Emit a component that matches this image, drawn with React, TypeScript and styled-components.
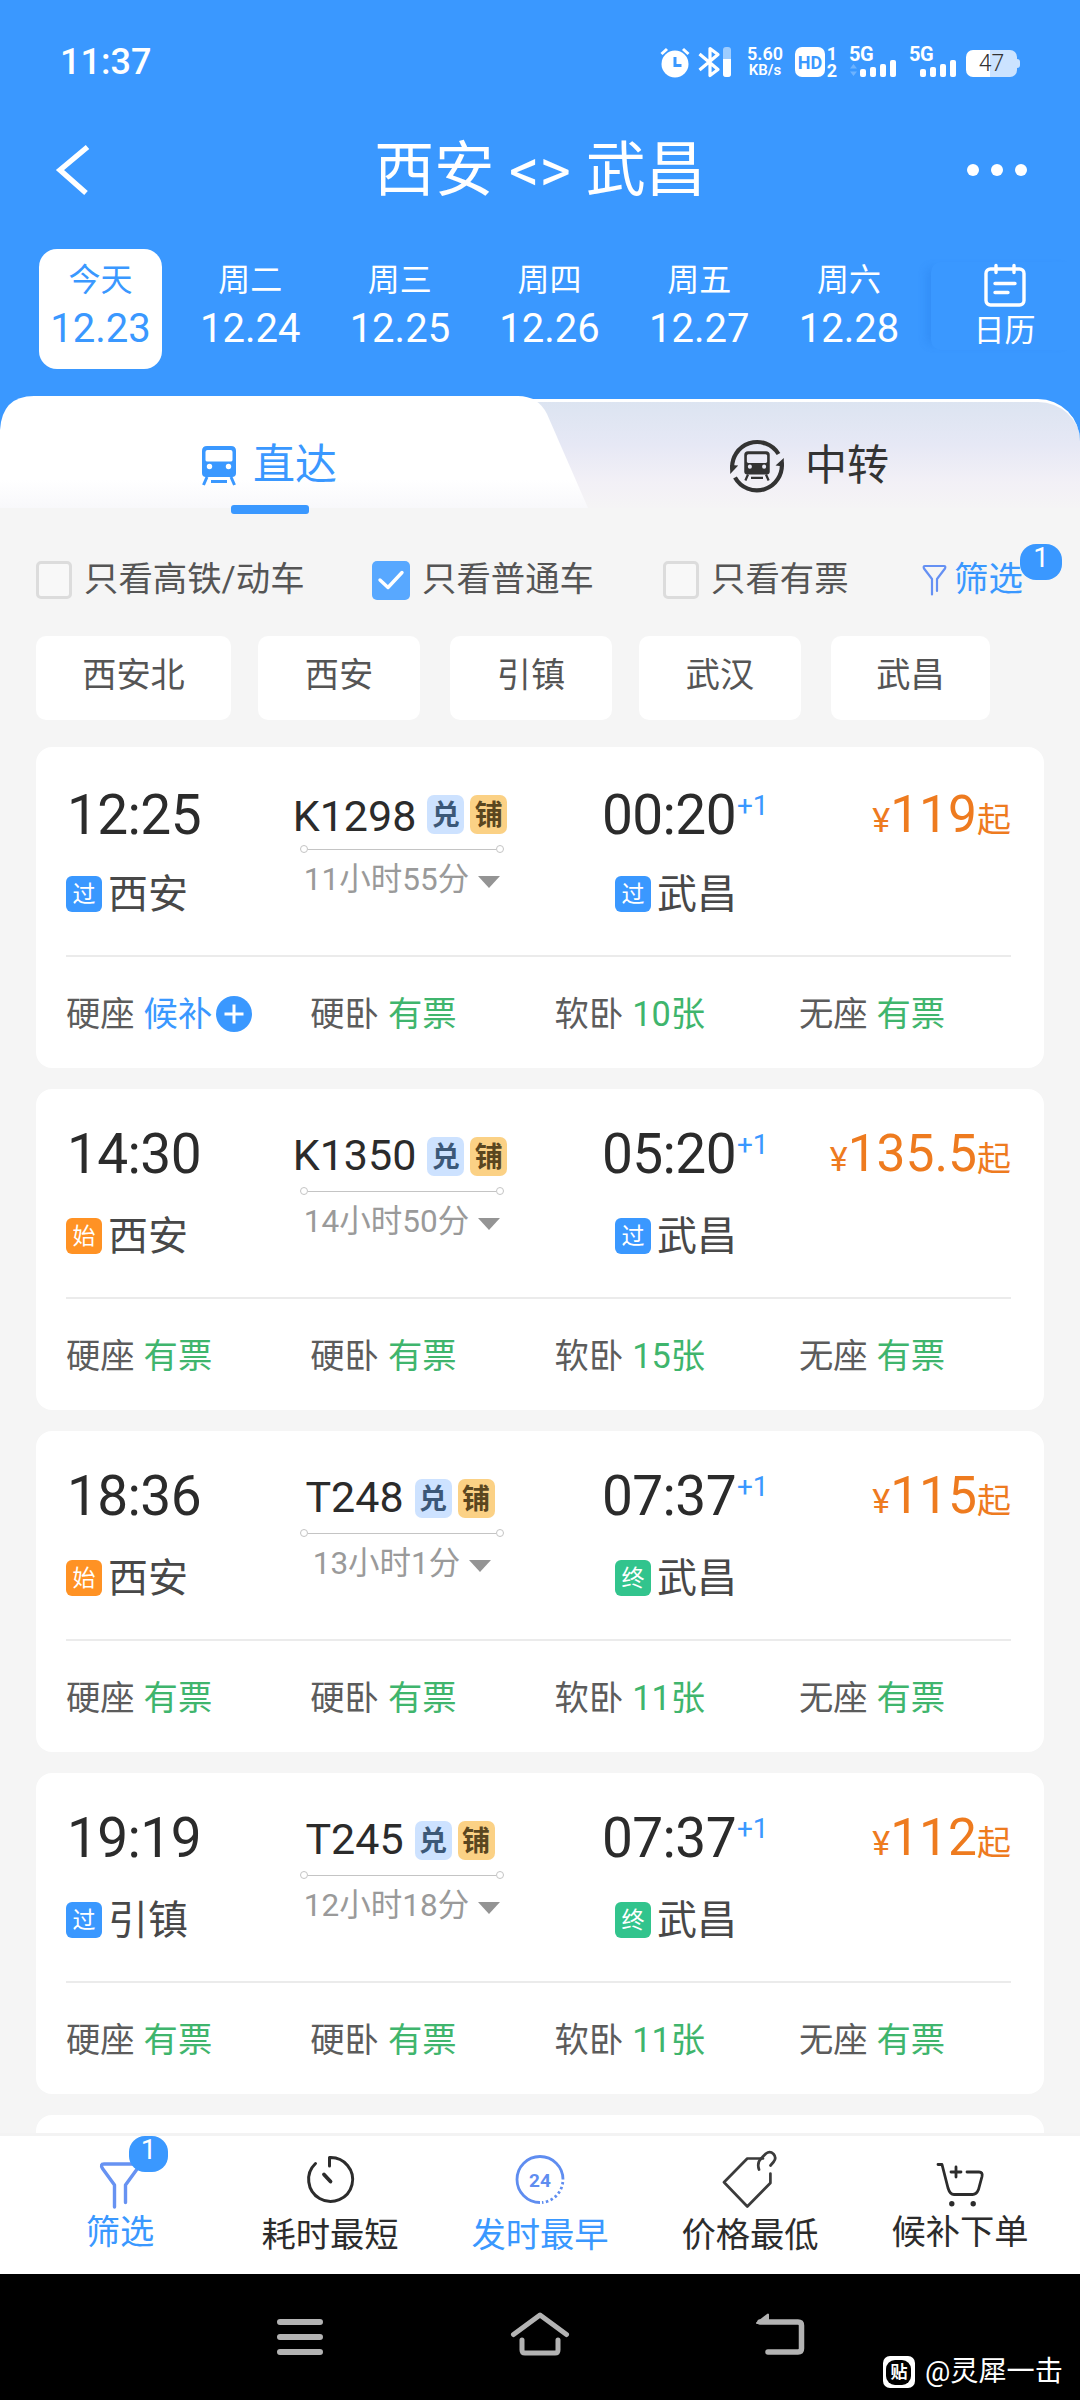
import React from "react";
import styled, { createGlobalStyle, css } from "styled-components";

const BLUE = "#3a98ff";
const GREEN = "#3fb56d";
const ORANGE = "#ee7b1f";

const GlobalStyle = createGlobalStyle`
  body { margin: 0; background: #f5f5f5; }
  * { box-sizing: border-box; }
  svg { display: block; flex: none; overflow: visible; }
`;

const Phone = styled.div`
  width: 1080px;
  height: 2400px;
  display: flex;
  flex-direction: column;
  overflow: hidden;
  background: #f5f5f5;
  color: #333;
  font-family: Roboto, "Noto Sans CJK SC", sans-serif;
  white-space: nowrap;
`;

const Header = styled.header`
  background: ${BLUE};
  color: #fff;
  flex: none;
`;

/* ---------- status bar ---------- */
const StatusBar = styled.div`
  height: 121px;
  padding: 2px 60px 0 60px;
  display: flex;
  align-items: center;
  justify-content: space-between;
`;
const Clock = styled.span`
  font-size: 36px;
  line-height: 40px;
  font-weight: 500;
`;
const StatusIcons = styled.div`
  display: flex;
  align-items: center;
  height: 30px;
`;
const Gap = styled.span<{ $w: number }>`
  width: ${(p) => p.$w}px;
`;
const Speed = styled.div`
  width: 36px;
  margin: 0 12px 0 15px;
  display: flex;
  flex-direction: column;
  align-items: center;
  font-weight: 600;
`;
const SpeedLine = styled.span<{ $size: number }>`
  font-size: ${(p) => p.$size}px;
  line-height: 16px;
`;
const HdBadge = styled.span`
  width: 30px;
  height: 30px;
  border-radius: 7px;
  background: #fff;
  color: ${BLUE};
  font-size: 18px;
  line-height: 31px;
  font-weight: 700;
  text-align: center;
`;
const SimNumbers = styled.span`
  width: 12px;
  margin-left: 1px;
  display: flex;
  flex-direction: column;
  align-items: center;
  font-size: 18px;
  line-height: 17px;
  font-weight: 700;
`;
const Signal = styled.span<{ $gap: number }>`
  width: 48px;
  height: 30px;
  margin-left: ${(p) => p.$gap}px;
  display: grid;
  grid-template-columns: 11px 37px;
  grid-template-rows: 14px 16px;
`;
const NetType = styled.span`
  grid-column: 1 / 3;
  font-size: 20px;
  line-height: 15px;
  font-weight: 700;
  letter-spacing: -0.5px;
`;
const Bars = styled.span`
  grid-column: 2;
  display: flex;
  align-items: flex-end;
  gap: 4px;
`;
const Bar = styled.i<{ $h: number }>`
  width: 6px;
  height: ${(p) => p.$h}px;
  border-radius: 2px;
  background: #fff;
  flex: none;
`;
const Traffic = styled.svg`
  align-self: end;
`;
const Battery = styled.span`
  width: 51px;
  height: 27px;
  margin: 3px 0 0 9px;
  border-radius: 7px;
  background: linear-gradient(90deg, #fff 48%, #cbe3ff 48%);
  color: #333;
  font-size: 23px;
  line-height: 28px;
  font-weight: 300;
  text-align: center;
`;
const BatteryNub = styled.span`
  width: 3px;
  height: 9px;
  margin-top: 3px;
  border-radius: 0 3px 3px 0;
  background: #cbe3ff;
`;

/* ---------- title ---------- */
const TitleBar = styled.div`
  height: 94px;
  padding: 0 52px 0 56px;
  display: grid;
  grid-template-columns: 62px 1fr 66px;
  align-items: center;
`;
const Title = styled.h1`
  margin: 0;
  text-align: center;
  font-size: 60px;
  line-height: 94px;
  font-weight: 400;
  padding-top: 3px;
`;
const Dots = styled.div`
  display: flex;
  gap: 12px;
  padding-left: 5px;
`;
const Dot = styled.i`
  width: 12px;
  height: 12px;
  border-radius: 50%;
  background: #fff;
  flex: none;
`;

/* ---------- dates ---------- */
const DateStrip = styled.div`
  height: 181px;
  padding: 34px 0 27px 39px;
  display: flex;
`;
const DateList = styled.div`
  display: flex;
  gap: 26.7px;
  width: 880px;
`;
const DateTile = styled.div<{ $active?: boolean }>`
  width: 123px;
  height: 120px;
  flex: none;
  padding-top: 9px;
  border-radius: 18px;
  text-align: center;
  ${(p) =>
    p.$active &&
    css`
      background: #fff;
      color: ${BLUE};
    `}
`;
const Weekday = styled.div`
  font-size: 32px;
  line-height: 44px;
`;
const DayNumber = styled.div`
  font-size: 40px;
  line-height: 54px;
`;
const CalendarButton = styled.div`
  height: 88px;
  width: 149px;
  margin: 13px 0 0 12px;
  padding: 2px 2px 0 0;
  border-radius: 10px;
  box-shadow: -10px 0 10px -6px rgba(20, 100, 210, 0.2);
  display: flex;
  flex-direction: column;
  align-items: center;
  font-size: 31px;
  line-height: 46px;
`;

/* ---------- tabs ---------- */
const Tabs = styled.div`
  height: 112px;
  flex: none;
  display: flex;
  background: linear-gradient(${BLUE} 62px, #f5f5f5 62px);
`;
const TabItem = styled.div`
  display: flex;
  align-items: center;
  font-size: 42px;
  line-height: 60px;
`;
const DirectTab = styled(TabItem)`
  position: relative;
  z-index: 1;
  width: 588px;
  gap: 16px;
  padding: 26px 0 0 201px;
  color: ${BLUE};
  &::before {
    content: "";
    position: absolute;
    inset: 0;
    z-index: -1;
    background: linear-gradient(#fff 84px, #f8f8fb);
    clip-path: path("M0 34 Q2 0 34 0 H518 Q538 0 547 18 L588 112 H0 Z");
  }
  &::after {
    content: "";
    position: absolute;
    left: 231px;
    top: 109px;
    width: 78px;
    height: 9px;
    border-radius: 3px;
    background: ${BLUE};
  }
`;
const TransferTab = styled(TabItem)`
  flex: 1;
  margin: 3px 0 0 -80px;
  padding: 21px 0 0 221px;
  gap: 20px;
  border-top: 3px solid #fff;
  border-radius: 0 42px 0 0;
  background: linear-gradient(#dce4f1, #e6e8f5 40%, #f2f0f6 75%, #f5f4f5);
`;

/* ---------- filters ---------- */
const FilterRow = styled.div`
  height: 50px;
  flex: none;
  margin: 47px 0 31px 36px;
  display: grid;
  grid-template-columns: 336px 291px 259px auto;
  align-items: center;
`;
const Option = styled.label`
  display: flex;
  align-items: center;
  gap: 12px;
  font-size: 34.4px;
  line-height: 48px;
  color: #555;
`;
const OptionText = styled.span`
  margin-top: -2px;
`;
const Box = styled.span<{ $on?: boolean }>`
  width: ${(p) => (p.$on ? 38 : 36)}px;
  height: ${(p) => (p.$on ? 39 : 38)}px;
  border-radius: 5px;
  border: ${(p) => (p.$on ? "0" : "3px solid #dcdcdc")};
  background: ${(p) => (p.$on ? "#58a8ff" : "#f8f8f8")};
  display: flex;
  align-items: center;
  justify-content: center;
`;
const FilterLink = styled(Option)`
  position: relative;
  gap: 7px;
  color: ${BLUE};
`;
const Badge = styled.span<{ $x: number; $y: number; $w: number }>`
  position: absolute;
  left: ${(p) => p.$x}px;
  top: ${(p) => p.$y}px;
  width: ${(p) => p.$w}px;
  height: 36px;
  border-radius: 16px;
  background: ${BLUE};
  color: #fff;
  font-size: 28px;
  line-height: 28px;
  text-align: center;
`;

const Chips = styled.div`
  height: 84px;
  flex: none;
  margin: 0 0 27px 36px;
  display: flex;
`;
const Chip = styled.span<{ $w: number; $gap: number }>`
  width: ${(p) => p.$w}px;
  margin-right: ${(p) => p.$gap}px;
  border-radius: 10px;
  background: #fff;
  color: #555;
  font-size: 34.2px;
  line-height: 78px;
  text-align: center;
`;

/* ---------- train cards ---------- */
const List = styled.main`
  flex: 1;
  min-height: 0;
  overflow: hidden;
  padding: 0 36px;
  display: flex;
  flex-direction: column;
  gap: 21px;
`;
const Card = styled.article`
  height: 321px;
  flex: none;
  padding: 35px 33px 0 30px;
  border-radius: 16px;
  background: #fff;
`;
const Trip = styled.div`
  height: 175px;
  display: grid;
  grid-template-columns: 200px 268px 250px 1fr;
  border-bottom: 2px solid #ebebeb;
`;
const Stop = styled.div<{ $indent?: number }>`
  padding-left: ${(p) => p.$indent || 0}px;
`;
const TimeRow = styled.div<{ $shift: number }>`
  height: 94px;
  padding: ${(p) => p.$shift}px 0 0 1px;
  display: flex;
  font-size: 55px;
  letter-spacing: -0.6px;
  line-height: 60px;
  color: #2b2b2b;
`;
const NextDay = styled.span`
  margin-left: 1px;
  font-size: 28px;
  letter-spacing: 0;
  line-height: 42px;
  color: ${BLUE};
`;
const Station = styled.div<{ $indent?: number }>`
  margin-left: ${(p) => p.$indent || 0}px;
  height: 36px;
  display: flex;
  align-items: center;
  gap: 6px;
  font-size: 40px;
  line-height: 38px;
  color: #484848;
`;
const StationName = styled.span`
  padding-top: 2px;
`;
const kinds = { 过: BLUE, 始: "#ff9224", 终: "#32c48d" } as const;
type Kind = keyof typeof kinds;
const StationKind = styled.span<{ $kind: Kind }>`
  width: 36px;
  height: 36px;
  border-radius: 6px;
  background: ${(p) => kinds[p.$kind]};
  color: #fff;
  font-size: 23px;
  line-height: 38px;
  text-align: center;
`;
const Middle = styled.div`
  display: flex;
  flex-direction: column;
  align-items: center;
`;
const CodeRow = styled.div`
  height: 64px;
  padding-top: 13px;
  display: flex;
  align-items: flex-start;
`;
const Code = styled.span<{ $shift: number }>`
  margin: ${(p) => p.$shift - 1}px 11px 0 0;
  font-size: 43px;
  line-height: 38px;
  color: #2b2b2b;
`;
const Tag = styled.span<{ $tone: "blue" | "gold" }>`
  width: 37px;
  height: 39px;
  margin-right: ${(p) => (p.$tone === "blue" ? 6 : 0)}px;
  border-radius: 7px;
  background: ${(p) => (p.$tone === "blue" ? "#cde2ff" : "#fbd185")};
  color: ${(p) => (p.$tone === "blue" ? "#3c5878" : "#5a461f")};
  font-size: 28px;
  line-height: 42px;
  font-weight: 700;
  display: flex;
  justify-content: center;
`;
const Track = styled.div`
  width: 204px;
  height: 6px;
  margin-left: 4px;
  display: flex;
  align-items: center;
  &::before,
  &::after {
    content: "";
    width: 6px;
    height: 6px;
    border: 1px solid #c4c4c4;
    border-radius: 50%;
  }
`;
const TrackLine = styled.i`
  flex: 1;
  height: 1px;
  background: #c4c4c4;
`;
const Duration = styled.div`
  margin: 7px 0 0 4px;
  display: flex;
  align-items: center;
  gap: 9px;
  font-size: 31.5px;
  line-height: 42px;
  color: #9a9a9a;
`;
const Arrow = styled.i`
  margin-top: 4px;
  border: 11px solid transparent;
  border-top: 12px solid #949494;
  border-bottom: 0;
`;
const Price = styled.div<{ $shift: number }>`
  height: 60px;
  margin-top: ${(p) => p.$shift}px;
  display: flex;
  align-items: baseline;
  justify-content: flex-end;
  line-height: 60px;
  font-size: 34px;
  color: ${ORANGE};
`;
const Amount = styled.b`
  font-size: 51.5px;
  font-weight: 400;
`;
const Seats = styled.div`
  display: grid;
  grid-template-columns: 244.3px 244.3px 244.3px auto;
`;
const Seat = styled.div`
  height: 114px;
  display: flex;
  align-items: center;
  gap: 9px;
  font-size: 34.3px;
  line-height: 40px;
  color: #5c5c5c;
`;
const SeatState = styled.span<{ $color: string }>`
  display: flex;
  align-items: center;
  gap: 4px;
  color: ${(p) => p.$color};
`;

/* ---------- bottom bars ---------- */
const SortBar = styled.footer`
  height: 141px;
  flex: none;
  padding: 0 15px;
  border-top: 3px solid #f3f3f3;
  background: #fff;
  display: grid;
  grid-template-columns: repeat(5, 210px);
`;
const SortItem = styled.div<{ $blue?: boolean }>`
  position: relative;
  display: flex;
  flex-direction: column;
  align-items: center;
  padding-top: 11px;
  font-size: 34.3px;
  line-height: 46px;
  color: ${(p) => (p.$blue ? BLUE : "#2c2c2c")};
`;
const SortLabel = styled.span<{ $up?: boolean }>`
  margin-top: ${(p) => (p.$up ? 6 : 9)}px;
`;
const NavBar = styled.nav`
  height: 126px;
  flex: none;
  background: #000;
  position: relative;
  display: flex;
  align-items: flex-start;
  padding: 32px 0 0 270px;
  gap: 180px;
`;
const Watermark = styled.div`
  position: absolute;
  right: 17px;
  bottom: 10px;
  display: flex;
  align-items: center;
  gap: 10px;
  color: #fff;
  font-size: 28.2px;
  line-height: 36px;
`;
const Logo = styled.span`
  width: 32px;
  height: 32px;
  border-radius: 7px;
  background: #fff;
  display: flex;
  align-items: center;
  justify-content: center;
`;
const LogoInner = styled.span`
  width: 25px;
  height: 25px;
  border-radius: 9px;
  background: #000;
  font-size: 17px;
  line-height: 25px;
  font-weight: 700;
  text-align: center;
`;

/* ---------- icons ---------- */
const AlarmIcon = () => (
  <svg width="30" height="30" viewBox="0 0 30 30">
    <circle cx="15" cy="17" r="13.500" fill="#fff" />
    <path d="M1.500 7 7 2M28.500 7 23 2" stroke="#fff" strokeWidth="3" fill="none" />
    <path d="M15 10v8.500h6.500" stroke={BLUE} strokeWidth="3" fill="none" />
  </svg>
);
const BluetoothIcon = () => (
  <svg width="34" height="30" viewBox="0 0 34 30">
    <path d="M1.500 7 20 22.500 12 28.500V1.500L20 7.500 1.500 23" stroke="#fff" strokeWidth="3.200" fill="none" strokeLinejoin="round" />
    <rect x="25" y="0" width="8" height="30" rx="3" fill="#9dccff" />
    <path d="M25 12h8v15a3 3 0 0 1-3 3h-2a3 3 0 0 1-3-3z" fill="#fff" />
  </svg>
);
const BackIcon = () => (
  <svg width="34" height="50" viewBox="0 0 34 50">
    <path d="M31.500 2 4 25 30 48" stroke="#fff" strokeWidth="5.400" fill="none" />
  </svg>
);
const CalendarIcon = () => (
  <svg width="42" height="44" viewBox="0 0 42 44" fill="none" stroke="#fff" strokeWidth="3.400" strokeLinecap="round">
    <rect x="2" y="5" width="38" height="36" rx="4.500" />
    <path d="M12 1.500v7M30 1.500v7M11 19.500h20M11 28.500h13" />
  </svg>
);
const TrainShape = ({ color, hole }: { color: string; hole: string }) => (
  <>
    <path d="M6 1h24q5 0 5 5v22q0 4-4 4H5q-4 0-4-4V6q0-5 5-5z" fill={color} />
    <path d="M4.500 7q0-2 2-2h23q2 0 2 2v8q0 1.500-2 1.500h-23q-2 0-2-1.500z" fill={hole} />
    <circle cx="8.500" cy="21.500" r="2.700" fill={hole} />
    <circle cx="27.500" cy="21.500" r="2.700" fill={hole} />
    <path d="M6 32 2.500 40M30 32 33.500 40M10 36.500h16" stroke={color} strokeWidth="3" fill="none" />
  </>
);
const TrainIcon = () => (
  <svg width="36" height="40" viewBox="0 0 36 40">
    <TrainShape color={BLUE} hole="#fff" />
  </svg>
);
const TransferIcon = () => (
  <svg width="56" height="58" viewBox="0 0 56 58">
    <g fill="none" stroke="#333" strokeWidth="4.200">
      <path d="M3.300 32.500A25 25 0 0 1 49.500 17" />
      <path d="M52.700 25.500A25 25 0 0 1 6 40.500" />
    </g>
    <path d="M1.200 37V28l8 .500zM54.800 21v8.500l-8.300-1z" fill="#333" />
    <g transform="translate(14.500 13.500) scale(.75)">
      <TrainShape color="#333" hole="#e9e9f5" />
    </g>
  </svg>
);
const CheckIcon = () => (
  <svg width="26" height="20" viewBox="0 0 26 20">
    <path d="M2 10l8 7.500L24 2.500" stroke="#fff" strokeWidth="3.400" fill="none" strokeLinecap="round" strokeLinejoin="round" />
  </svg>
);
const SmallFunnel = () => (
  <svg width="25" height="32" viewBox="0 0 25 32" fill="none" stroke="#6590f3" strokeWidth="2.200" strokeLinecap="round" strokeLinejoin="round">
    <path d="M10 30.500V15L2 4.500Q1 2 3 2h19q2 0 1 2.500L15 15v12" />
  </svg>
);
const BigFunnel = () => (
  <svg width="50" height="56" viewBox="0 0 50 56" fill="none" stroke="#6792f2" strokeWidth="3.400" strokeLinecap="round" strokeLinejoin="round">
    <path d="M19.500 60V38L7.500 21.500Q5 17 9 17h32q4 0 1.500 4.500L30.500 38v17.500" />
  </svg>
);
const TimerIcon = () => (
  <svg width="50" height="56" viewBox="0 0 50 56" fill="none" stroke="#2c2c2c" strokeWidth="3" strokeLinecap="round" strokeLinejoin="round">
    <path d="M24.500 19V10.500A22 22 0 1 1 10.500 16.500" />
    <path d="M19 27.500l6.500 7" strokeWidth="3.800" />
  </svg>
);
const Digits24 = styled.text`
  font: 700 19px Roboto, sans-serif;
`;
const EarlyIcon = () => (
  <svg width="50" height="56" viewBox="0 0 50 56" fill="none" stroke="#5f8df0" strokeWidth="2.800">
    <path d="M25 55.500A23 23 0 1 1 48 32.500" />
    <path d="M47.800 35A23 23 0 0 1 27 55.500" strokeDasharray="2.500 2.500" />
    <Digits24 x="25" y="39.500" textAnchor="middle" fill="#5f8df0" stroke="none">24</Digits24>
  </svg>
);
const TagIcon = () => (
  <svg width="56" height="56" viewBox="0 0 56 56" fill="none" stroke="#3b3b3b" strokeWidth="2.700" strokeLinecap="round" strokeLinejoin="round">
    <path d="M48.400 26.500v9.500L25.300 59.500 2 35.300 25.300 11.500H41" />
    <path d="M37 22.500q-2.500-7 3-12l4-4q4-3 7.500 .5 3.500 4 0 8L48.500 18.500" />
  </svg>
);
const CartIcon = () => (
  <svg width="50" height="56" viewBox="0 0 50 56" fill="none" stroke="#2c2c2c" strokeWidth="2.800" strokeLinecap="round" strokeLinejoin="round">
    <path d="M3 17.500H7L13 41q2 6.500 6 6.500h18.500q4 0 6-5l3.500-13q1-4.500-3-4.500H32" />
    <path d="M21 20v10M16 25h10" />
    <circle cx="16.800" cy="56.700" r="1.700" fill="#2c2c2c" strokeWidth="2" />
    <circle cx="38.200" cy="56.700" r="1.700" fill="#2c2c2c" strokeWidth="2" />
  </svg>
);
const PlusIcon = () => (
  <svg width="36" height="36" viewBox="0 0 36 36">
    <circle cx="18" cy="18" r="18" fill={BLUE} />
    <path d="M18 8.500v19M8.500 18h19" stroke="#fff" strokeWidth="3" />
  </svg>
);
const MenuIcon = () => (
  <svg width="60" height="56" viewBox="0 0 60 56" stroke="#b3b3b3" strokeWidth="6" strokeLinecap="round">
    <path d="M10 16h40M10 31h40M10 46h40" />
  </svg>
);
const HomeIcon = () => (
  <svg width="60" height="56" viewBox="0 0 60 56" fill="none" stroke="#b3b3b3" strokeWidth="5" strokeLinecap="round" strokeLinejoin="round">
    <path d="M3.500 28.500 30 9l26.500 19.500" />
    <path d="M12 34v10q0 3 3 3h30q3 0 3-3V34" />
  </svg>
);
const ReturnIcon = () => (
  <svg width="60" height="56" viewBox="0 0 60 56" fill="none" stroke="#b3b3b3" strokeWidth="5.500" strokeLinecap="round">
    <path d="M10 16h38q3.500 0 3.500 3.500v23q0 3.500-3.500 3.500H18" />
    <path d="M7 17 18 8.500V17z" fill="#b3b3b3" strokeWidth="2" strokeLinejoin="round" />
  </svg>
);

/* ---------- data ---------- */
const dates = [
  ["今天", "12.23"],
  ["周二", "12.24"],
  ["周三", "12.25"],
  ["周四", "12.26"],
  ["周五", "12.27"],
  ["周六", "12.28"],
];
const chips: [string, number, number][] = [
  ["西安北", 195, 27],
  ["西安", 162, 30],
  ["引镇", 162, 27],
  ["武汉", 162, 30],
  ["武昌", 159, 0],
];
type Train = {
  dep: string; from: string; fromKind: Kind;
  arr: string; toKind: Kind;
  code: string; span: string; price: string;
  hard: string; soft: string;
};
const trains: Train[] = [
  { dep: "12:25", from: "西安", fromKind: "过", arr: "00:20", toKind: "过", code: "K1298", span: "11小时55分", price: "119", hard: "候补", soft: "10张" },
  { dep: "14:30", from: "西安", fromKind: "始", arr: "05:20", toKind: "过", code: "K1350", span: "14小时50分", price: "135.5", hard: "有票", soft: "15张" },
  { dep: "18:36", from: "西安", fromKind: "始", arr: "07:37", toKind: "终", code: "T248", span: "13小时1分", price: "115", hard: "有票", soft: "11张" },
  { dep: "19:19", from: "引镇", fromKind: "过", arr: "07:37", toKind: "终", code: "T245", span: "12小时18分", price: "112", hard: "有票", soft: "11张" },
];

const TrainCard = ({ t, shift }: { t: Train; shift: number }) => {
  const seats = [["硬座", t.hard], ["硬卧", "有票"], ["软卧", t.soft], ["无座", "有票"]];
  return (
    <Card>
      <Trip>
        <Stop>
          <TimeRow $shift={shift}>{t.dep}</TimeRow>
          <Station>
            <StationKind $kind={t.fromKind}>{t.fromKind}</StationKind>
            <StationName>{t.from}</StationName>
          </Station>
        </Stop>
        <Middle>
          <CodeRow>
            <Code $shift={shift}>{t.code}</Code>
            <Tag $tone="blue">兑</Tag>
            <Tag $tone="gold">铺</Tag>
          </CodeRow>
          <Track>
            <TrackLine />
          </Track>
          <Duration>
            {t.span}
            <Arrow />
          </Duration>
        </Middle>
        <Stop $indent={67}>
          <TimeRow $shift={shift}>
            {t.arr}
            <NextDay>+1</NextDay>
          </TimeRow>
          <Station $indent={14}>
            <StationKind $kind={t.toKind}>{t.toKind}</StationKind>
            <StationName>武昌</StationName>
          </Station>
        </Stop>
        <Price $shift={shift}>
          ¥<Amount>{t.price}</Amount>起
        </Price>
      </Trip>
      <Seats>
        {seats.map(([name, state]) => (
          <Seat key={name}>
            {name}
            <SeatState $color={state === "候补" ? BLUE : GREEN}>
              {state}
              {state === "候补" && <PlusIcon />}
            </SeatState>
          </Seat>
        ))}
      </Seats>
    </Card>
  );
};

const SignalBars = () => (
  <Bars>
    <Bar $h={8} />
    <Bar $h={10} />
    <Bar $h={13} />
    <Bar $h={17} />
  </Bars>
);

export default function App() {
  return (
    <Phone>
      <GlobalStyle />
      <Header>
        <StatusBar>
          <Clock>11:37</Clock>
          <StatusIcons>
            <AlarmIcon />
            <Gap $w={8} />
            <BluetoothIcon />
            <Speed>
              <SpeedLine $size={18}>5.60</SpeedLine>
              <SpeedLine $size={15}>KB/s</SpeedLine>
            </Speed>
            <HdBadge>HD</HdBadge>
            <SimNumbers>
              <span>1</span>
              <span>2</span>
            </SimNumbers>
            <Signal $gap={11}>
              <NetType>5G</NetType>
              <Traffic width="9" height="14" viewBox="0 0 9 14">
                <path d="M1 5.500 4.500 1 8 5.500zM1 8.500 4.500 13 8 8.500z" fill="#6db3ff" />
              </Traffic>
              <SignalBars />
            </Signal>
            <Signal $gap={12}>
              <NetType>5G</NetType>
              <SignalBars />
            </Signal>
            <Battery>47</Battery>
            <BatteryNub />
          </StatusIcons>
        </StatusBar>
        <TitleBar>
          <BackIcon />
          <Title>西安 &lt;&gt; 武昌</Title>
          <Dots>
            <Dot />
            <Dot />
            <Dot />
          </Dots>
        </TitleBar>
        <DateStrip>
          <DateList>
            {dates.map(([w, d], i) => (
              <DateTile key={d} $active={i === 0}>
                <Weekday>{w}</Weekday>
                <DayNumber>{d}</DayNumber>
              </DateTile>
            ))}
          </DateList>
          <CalendarButton>
            <CalendarIcon />
            日历
          </CalendarButton>
        </DateStrip>
      </Header>

      <Tabs>
        <DirectTab>
          <TrainIcon />
          直达
        </DirectTab>
        <TransferTab>
          <TransferIcon />
          中转
        </TransferTab>
      </Tabs>

      <FilterRow>
        <Option>
          <Box />
          <OptionText>只看高铁/动车</OptionText>
        </Option>
        <Option>
          <Box $on>
            <CheckIcon />
          </Box>
          <OptionText>只看普通车</OptionText>
        </Option>
        <Option>
          <Box />
          <OptionText>只看有票</OptionText>
        </Option>
        <FilterLink>
          <SmallFunnel />
          <OptionText>筛选</OptionText>
          <Badge $x={98} $y={-13} $w={42}>1</Badge>
        </FilterLink>
      </FilterRow>

      <Chips>
        {chips.map(([name, w, gap]) => (
          <Chip key={name} $w={w} $gap={gap}>
            {name}
          </Chip>
        ))}
      </Chips>

      <List>
        {trains.map((t, i) => (
          <TrainCard key={t.code} t={t} shift={i === 0 ? 3 : 0} />
        ))}
        <Card />
      </List>

      <SortBar>
        <SortItem $blue>
          <BigFunnel />
          <SortLabel $up>筛选</SortLabel>
          <Badge $x={114} $y={0} $w={39}>1</Badge>
        </SortItem>
        <SortItem>
          <TimerIcon />
          <SortLabel>耗时最短</SortLabel>
        </SortItem>
        <SortItem $blue>
          <EarlyIcon />
          <SortLabel>发时最早</SortLabel>
        </SortItem>
        <SortItem>
          <TagIcon />
          <SortLabel>价格最低</SortLabel>
        </SortItem>
        <SortItem>
          <CartIcon />
          <SortLabel $up>候补下单</SortLabel>
        </SortItem>
      </SortBar>

      <NavBar>
        <MenuIcon />
        <HomeIcon />
        <ReturnIcon />
        <Watermark>
          <Logo>
            <LogoInner>贴</LogoInner>
          </Logo>
          @灵犀一击
        </Watermark>
      </NavBar>
    </Phone>
  );
}
